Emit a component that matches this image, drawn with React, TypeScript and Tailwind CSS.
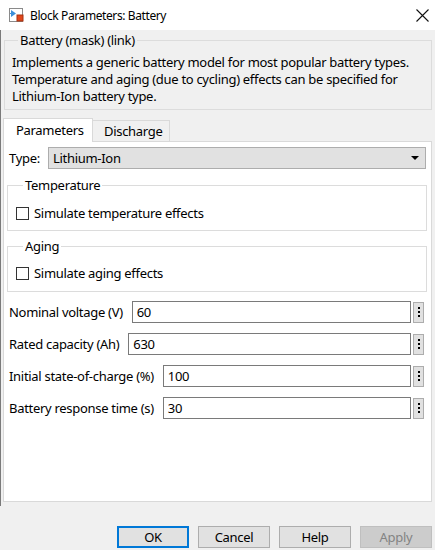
import React from "react";

const fields = [
  { label: "Nominal voltage (V)", value: "60" },
  { label: "Rated capacity (Ah)", value: "630" },
  { label: "Initial state-of-charge (%)", value: "100" },
  { label: "Battery response time (s)", value: "30" },
];

function BlockIcon() {
  return (
    <svg width="15" height="14" viewBox="0 0 15 14">
      <rect x="0.5" y="0.5" width="13" height="13" fill="#fff" stroke="#8a8a8a" />
      <path d="M2 2 L2 9 L7 5.5 Z" fill="#3c8fd8" />
      <path d="M1 5.5 H3" stroke="#3c8fd8" />
      <rect x="8" y="7" width="6" height="6" fill="#e0481d" stroke="#a8300e" strokeWidth="1" />
    </svg>
  );
}

function Checkbox({ label }: { label: string }) {
  return (
    <label className="flex items-center gap-[5px]">
      <span className="h-[13px] w-[13px] border border-[#333] bg-white" />
      <span>{label}</span>
    </label>
  );
}

function DotsButton() {
  return (
    <button className="ml-[2px] flex h-[21px] w-[11px] flex-col items-center justify-center gap-[2px] border border-[#adadad] bg-[#e1e1e1]">
      <span className="h-[2px] w-[2px] bg-black" />
      <span className="h-[2px] w-[2px] bg-black" />
      <span className="h-[2px] w-[2px] bg-black" />
    </button>
  );
}

export default function App() {
  return (
    <div className="relative flex h-[550px] w-[435px] flex-col overflow-hidden bg-[#f0f0f0] font-['Segoe_UI','Noto_Sans',sans-serif] text-[13px] leading-[17px] tracking-[-0.3px] text-black">
      <div className="flex h-[30px] items-center bg-white pl-[9px] pr-[5px]">
        <BlockIcon />
        <span className="ml-[6px] text-[12px] tracking-[-0.4px]">Block Parameters: Battery</span>
        <svg className="ml-auto mr-[1px]" width="13" height="13" viewBox="0 0 13 13">
          <path d="M0.5 0.5 L12.5 12.5 M12.5 0.5 L0.5 12.5" stroke="#111" strokeWidth="1.1" />
        </svg>
      </div>

      <div className="flex flex-col border-l border-[#7a7a7a] pb-[4px] pl-[2px] pr-[3px]">
        <fieldset className="mt-[3px] ml-[1px] border border-[#dcdcdc] px-[7px] pb-[4px]">
          <legend className="ml-[6px] px-[2px] leading-[15px]">Battery (mask) (link)</legend>
          <p className="pt-[6px]">
            Implements a generic battery model for most popular battery types.
            Temperature and aging (due to cycling) effects can be specified for
            Lithium-Ion battery type.
          </p>
        </fieldset>

        <div className="mt-[8px] flex items-end">
          <div className="relative z-10 -mb-px flex h-[24px] w-[90px] items-center border border-b-0 border-[#d9d9d9] bg-white pl-[12px]">
            Parameters
          </div>
          <div className="flex h-[21px] w-[77px] items-center border border-l-0 border-b-0 border-[#d9d9d9] bg-[#f0f0f0] pl-[11px]">
            Discharge
          </div>
        </div>

        <div className="flex h-[361px] w-[429px] flex-col border border-[#d9d9d9] bg-white px-[5px] pt-[5px]">
          <div className="flex items-center">
            <span className="w-[39px]">Type:</span>
            <div className="flex h-[22px] flex-1 items-center border border-[#adadad] bg-[#e1e1e1] pl-[4px] pr-[6px]">
              <span>Lithium-Ion</span>
              <svg className="ml-auto" width="8" height="4" viewBox="0 0 8 4">
                <path d="M0 0 H8 L4 4 Z" fill="#000" />
              </svg>
            </div>
          </div>

          <fieldset className="mt-[9px] mr-[-1px] ml-[-2px] h-[53px] border border-[#dcdcdc] px-[8px]">
            <legend className="ml-[7px] px-[2px] leading-[15px]">Temperature</legend>
            <div className="pt-[12px]">
              <Checkbox label="Simulate temperature effects" />
            </div>
          </fieldset>

          <fieldset className="mt-[8px] mr-[-1px] ml-[-2px] h-[53px] border border-[#dcdcdc] px-[8px]">
            <legend className="ml-[7px] px-[2px] leading-[15px]">Aging</legend>
            <div className="pt-[11px]">
              <Checkbox label="Simulate aging effects" />
            </div>
          </fieldset>

          <div className="mt-[9px] flex flex-col gap-[10px]">
            {fields.map((f) => (
              <div key={f.label} className="flex items-center pr-[2px]">
                <span className="mr-[9px] whitespace-nowrap">{f.label}</span>
                <div className="flex h-[22px] flex-1 items-center border border-[#7a7a7a] bg-white pl-[4px]">
                  {f.value}
                </div>
                <DotsButton />
              </div>
            ))}
          </div>
        </div>
      </div>

      <div className="mt-auto flex justify-end gap-[9px] pr-[3px] pb-[2px]">
        <button className="h-[22px] w-[72px] border-2 border-[#0078d7] bg-[#e1e1e1]">OK</button>
        <button className="h-[22px] w-[72px] border border-[#adadad] bg-[#e1e1e1]">Cancel</button>
        <button className="h-[22px] w-[72px] border border-[#adadad] bg-[#e1e1e1]">Help</button>
        <button className="h-[22px] w-[72px] border border-[#bfbfbf] bg-[#cccccc] text-[#838383]">Apply</button>
      </div>
    </div>
  );
}
